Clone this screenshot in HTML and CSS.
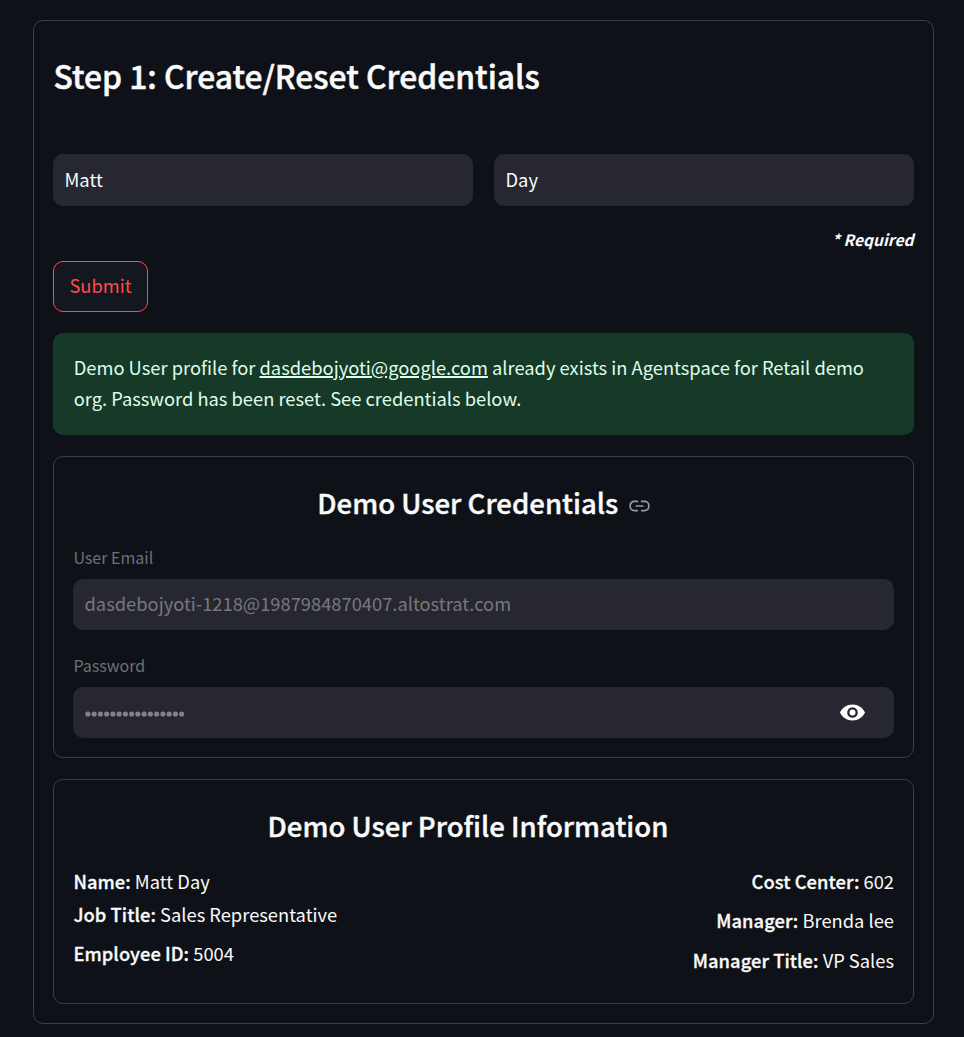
FILE: index.html
```html
<!DOCTYPE html>
<html lang="en">
<head>
<meta charset="utf-8">
<title>Create/Reset Credentials</title>
<link rel="stylesheet" href="styles.css">
</head>
<body>
<main class="card step">
  <h2 class="step-title"><span>Step 1: Create/Reset Credentials</span></h2>
  <div class="names">
    <div class="field"><span>Matt</span></div>
    <div class="field"><span>Day</span></div>
  </div>
  <p class="required"><span>* Required</span></p>
  <button class="submit" type="button"><span>Submit</span></button>
  <div class="alert">Demo User profile for <a class="mail">dasdebojyoti@google.com</a> already exists in Agentspace for Retail demo<br><span>org. Password has been reset. See credentials below.</span></div>
  <section class="card credentials">
    <h3 class="section-title"><span>Demo User Credentials</span>
      <svg class="link-icon" viewBox="0 0 21 12" fill="none" stroke="currentColor" stroke-width="1.7" stroke-linecap="round"><path d="M8.300 1.400H5.200a4 4 0 0 0-4 4v1.200a4 4 0 0 0 4 4h3.100M12.700 1.400h3.100a4 4 0 0 1 4 4v1.200a4 4 0 0 1-4 4h-3.100M7.200 6h6.600"/></svg>
    </h3>
    <div class="label"><span>User Email</span></div>
    <div class="field disabled"><span>dasdebojyoti-1218@1987984870407.altostrat.com</span></div>
    <div class="label second"><span>Password</span></div>
    <div class="field disabled password">
      <svg class="dots" viewBox="0 0 100 6"><path d="M2.900 3h93.900"/></svg>
      <svg class="eye" viewBox="0 0 25 17"><path fill="#fff" fill-rule="evenodd" d="M12.500 0.500C7 0.500 2.200 3.700 0 8.500 2.200 13.300 7 16.500 12.500 16.500S22.800 13.300 25 8.500C22.800 3.700 18 0.500 12.500 0.500Zm0 13.300a5.300 5.300 0 1 1 0-10.600 5.300 5.300 0 0 1 0 10.600Zm0-8.300a3 3 0 1 0 0 6 3 3 0 0 0 0-6Z"/></svg>
    </div>
  </section>
  <section class="card profile">
    <h3 class="section-title profile-title"><span>Demo User Profile Information</span></h3>
    <div class="details">
      <div class="col left">
        <p><b>Name:</b> Matt Day</p>
        <p class="tight"><b>Job Title:</b> Sales Representative</p>
        <p><b>Employee ID:</b> 5004</p>
      </div>
      <div class="col right">
        <p><b>Cost Center:</b> 602</p>
        <p><b>Manager:</b> Brenda lee</p>
        <p><b>Manager Title:</b> VP Sales</p>
      </div>
    </div>
  </section>
</main>
</body>
</html>
```

FILE: styles.css
```css
* { box-sizing: border-box; margin: 0; padding: 0; }
body {
  background: #0e1117;
  color: #fafafa;
  font-family: "Noto Sans CJK SC", "Noto Sans", sans-serif;
  font-size: 18.320px;
  line-height: 31px;
  padding: 20px 30px 13px 33px;
  white-space: nowrap;
}
.card { border: 1px solid #3d3f42; border-radius: 10px; padding: 0 19px; }
.step { display: flex; flex-direction: column; align-items: stretch; height: 1004px; }
.step-title { font-size: 31.800px; font-weight: 500; line-height: 46px; margin-top: 31px; padding-left: 0.500px; -webkit-text-stroke: 0.500px; }
.names { display: grid; grid-template-columns: 1fr 1fr; gap: 21px; margin-top: 56px; }
.field {
  display: flex; align-items: center; height: 52px; padding: 0 11.500px 2px;
  background: #262730; border-radius: 10px;
}
.required { text-align: right; font-size: 15.600px; font-weight: 700; font-style: italic; line-height: 26px; margin-top: 20px; padding-right: 0.500px; }
.submit {
  align-self: flex-start; width: 95px; height: 51px; margin-top: 9px; padding-bottom: 2px;
  border: 1px solid #ff4b4b; border-radius: 10px; background: #131720;
  color: #ff4b4b; font: inherit;
}
.alert { background: #173928; color: #dffde9; height: 102px; border-radius: 10px; padding: 19px 20.700px; margin-top: 21px; }
.mail { text-decoration: underline; text-decoration-thickness: 1.500px; }
.credentials { height: 302px; margin-top: 21px; }
.section-title { display: flex; align-items: center; justify-content: center; font-size: 27.550px; font-weight: 500; line-height: 40px; margin-top: 25px; -webkit-text-stroke: 0.400px; }
.link-icon { width: 21px; height: 12px; margin: 8px 0 0 10.500px; color: #9a9b9e; }
.label { font-size: 16px; line-height: 24px; margin-top: 23px; margin-bottom: 10px; padding-left: 0.400px; color: #6e7074; }
.label.second { margin-top: 23px; }
.disabled { height: 51px; color: #77787d; }
.password { justify-content: space-between; padding: 1px 29.500px 0 11.500px; }
.dots { width: 100px; height: 6px; margin-top: 1px; fill: none; stroke: #818287; stroke-width: 5.200; stroke-linecap: round; stroke-dasharray: 0 6.250; }
.eye { width: 25px; height: 17px; margin-bottom: 1px; }
.profile { height: 225px; margin-top: 21px; }
.profile-title { padding-right: 31px; }
.details { display: flex; justify-content: space-between; margin-top: 21px; }
.col { display: flex; flex-direction: column; gap: 8.300px; }
.left { padding-left: 0.400px; }
.right { text-align: right; }
.tight { margin-top: -6.500px; }
b { font-weight: 500; letter-spacing: 0.060px; -webkit-text-stroke: 0.300px; }
```
